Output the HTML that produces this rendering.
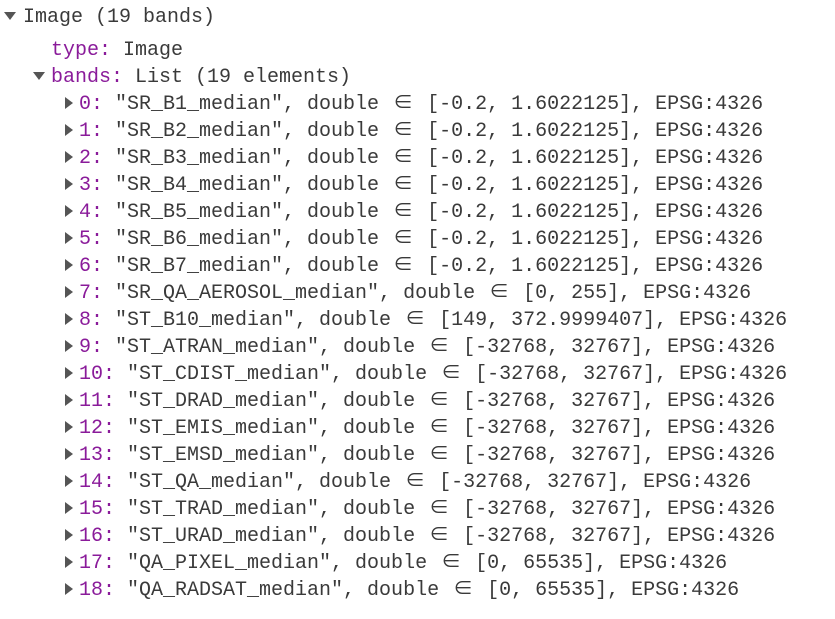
<!DOCTYPE html>
<html><head><meta charset="utf-8"><style>
body{margin:0;background:#fff;width:835px;height:619px;overflow:hidden;font-family:"Liberation Mono","Noto Sans CJK SC",monospace;font-size:20px;color:#3a3a3a}
.l{position:absolute;height:27px;line-height:27px;white-space:pre}
.k{color:#8a1b9a}
.t{position:absolute;width:0;height:0;border-style:solid}
.d{border-width:8px 6px 0 6px;border-color:#555 transparent transparent transparent}
.r{border-width:6px 0 6px 8px;border-color:transparent transparent transparent #555}
.e{display:inline-block;width:24px;text-align:center}
</style></head><body>
<div class="t d" style="left:4px;top:12px"></div>
<div class="l" style="left:23px;top:4px">Image (19 bands)</div>
<div class="l" style="left:51px;top:37px"><span class="k">type:</span> Image</div>
<div class="t d" style="left:33px;top:72px"></div>
<div class="l" style="left:51px;top:64px"><span class="k">bands:</span> List (19 elements)</div>
<div id="rows"></div>
<script>
var rows=[
['0','"SR_B1_median"','[-0.2, 1.6022125]'],
['1','"SR_B2_median"','[-0.2, 1.6022125]'],
['2','"SR_B3_median"','[-0.2, 1.6022125]'],
['3','"SR_B4_median"','[-0.2, 1.6022125]'],
['4','"SR_B5_median"','[-0.2, 1.6022125]'],
['5','"SR_B6_median"','[-0.2, 1.6022125]'],
['6','"SR_B7_median"','[-0.2, 1.6022125]'],
['7','"SR_QA_AEROSOL_median"','[0, 255]'],
['8','"ST_B10_median"','[149, 372.9999407]'],
['9','"ST_ATRAN_median"','[-32768, 32767]'],
['10','"ST_CDIST_median"','[-32768, 32767]'],
['11','"ST_DRAD_median"','[-32768, 32767]'],
['12','"ST_EMIS_median"','[-32768, 32767]'],
['13','"ST_EMSD_median"','[-32768, 32767]'],
['14','"ST_QA_median"','[-32768, 32767]'],
['15','"ST_TRAD_median"','[-32768, 32767]'],
['16','"ST_URAD_median"','[-32768, 32767]'],
['17','"QA_PIXEL_median"','[0, 65535]'],
['18','"QA_RADSAT_median"','[0, 65535]']];
var h='';
rows.forEach(function(r,i){var y=91+27*i;
h+='<div class="t r" style="left:65px;top:'+(y+6)+'px"></div><div class="l" style="left:79px;top:'+y+'px"><span class="k">'+r[0]+':</span> '+r[1]+', double <span class="e">∈</span> '+r[2]+', EPSG:4326</div>';});
document.getElementById('rows').innerHTML=h;
</script>
</body></html>
